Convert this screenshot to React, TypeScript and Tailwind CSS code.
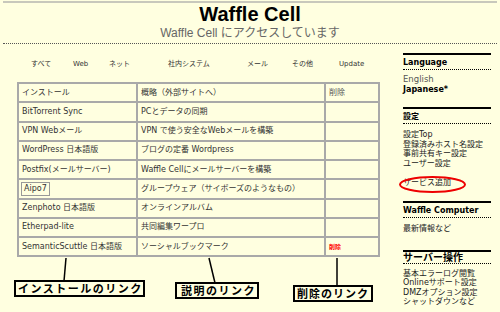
import React from 'react';

const navItems: { label: string; w: string }[] = [
    { label: 'すべて', w: 'w-[42px]' },
    { label: 'Web', w: 'w-[36px]' },
    { label: 'ネット', w: 'w-[59px]' },
    { label: '社内システム', w: 'w-[79px]' },
    { label: 'メール', w: 'w-[45px]' },
    { label: 'その他', w: 'w-[47px]' },
    { label: 'Update', w: 'w-[40px]' },
];

const rows: [string, string][] = [
    ['BitTorrent Sync', 'PCとデータの同期'],
    ['VPN Webメール', 'VPN で使う安全なWebメールを構築'],
    ['WordPress 日本語版', 'ブログの定番 Wordpress'],
    ['Postfix(メールサーバー)', 'Waffle Cellにメールサーバーを構築'],
    ['Aipo7', 'グループウェア（サイボーズのようなもの）'],
    ['Zenphoto 日本語版', 'オンラインアルバム'],
    ['Etherpad-lite', '共同編集ワープロ'],
    ['SemanticScuttle 日本語版', 'ソーシャルブックマーク'],
];

const cell = 'border border-[#a9a9a9] pl-[3px] align-middle';
const note = "absolute flex h-[17px] items-center whitespace-nowrap border-2 border-black font-['Noto_Sans_CJK_JP',sans-serif] text-[11px] font-bold text-black";

const SideHeading: React.FC<{ title: string; className?: string }> = ({ title, className }) => (
    <>
        <div className="h-[2px] bg-black" />
        <div className={`border-b border-dotted border-black font-bold text-black ${className ?? 'pt-px text-[8px] leading-[13px]'}`}>
            {title}
        </div>
    </>
);

const App: React.FC = () => {
    return (
        <div className="relative h-[312px] w-[500px] overflow-hidden bg-[#ffffe0] font-['DejaVu_Sans','Noto_Sans_CJK_JP',sans-serif] text-[#333]">
            {/* header */}
            <div className="mx-[3px] mt-px h-[2px] bg-[#c8c8bc]" />
            <h1 className="text-center font-['Liberation_Sans',sans-serif] text-[20px] font-bold leading-[23px] text-black">Waffle Cell</h1>
            <p className="text-center font-['Liberation_Sans','Noto_Sans_CJK_JP',sans-serif] text-[12px] leading-[14px] text-[#666]">
                Waffle Cell にアクセスしています
            </p>
            <div className="mx-[3px] mt-[3px] border-t border-dotted border-[#555]" />

            <div className="flex">
                {/* main column */}
                <div className="w-[400px]">
                    <div className="flex pl-[31px] pt-[15px] text-[7px] leading-[10px] text-[#333]">
                        {navItems.map((n) => (
                            <span key={n.label} className={n.w}>{n.label}</span>
                        ))}
                    </div>

                    <table className="ml-[17px] mt-[13px] w-[363px] table-fixed border-separate border-spacing-0 border border-[#a9a9a9] text-[8px] leading-[10px]">
                        <tbody>
                            <tr className="h-[19.25px]">
                                <td className={`${cell} w-[119px]`}>インストール</td>
                                <td className={`${cell} w-[188px]`}>概略（外部サイトへ）</td>
                                <td className={`${cell} w-[54px] text-[#555]`}>削除</td>
                            </tr>
                            {rows.map(([name, desc], i) => (
                                <tr key={name} className="h-[19.25px]">
                                    <td className={cell}>
                                        {name === 'Aipo7' ? (
                                            <span className="-ml-px inline-block border border-[#999] px-[2px] leading-[12px]">{name}</span>
                                        ) : (
                                            name
                                        )}
                                    </td>
                                    <td className={cell}>{desc}</td>
                                    <td className={`${cell} text-[6px] font-bold text-[#ff0000]`}>{i === rows.length - 1 ? '削除' : ''}</td>
                                </tr>
                            ))}
                        </tbody>
                    </table>
                </div>

                {/* sidebar */}
                <div className="ml-[3px] mt-[9px] w-[88px] text-[8px] leading-[9.5px] text-[#222]">
                    <SideHeading title="Language" />
                    <div className="pt-[5px]">
                        <div className="text-[8.5px] text-[#555]">English</div>
                        <div className="font-bold text-black">Japanese*</div>
                    </div>

                    <div className="mt-[13px]">
                        <SideHeading title="設定" />
                        <div className="pt-[6px]">
                            <div>設定Top</div>
                            <div>登録済みホスト名設定</div>
                            <div>事前共有キー設定</div>
                            <div>ユーザー設定</div>
                            <div className="h-[9.5px]" />
                            <div>サービス追加</div>
                        </div>
                    </div>

                    <div className="mt-[14px]">
                        <SideHeading title="Waffle Computer" />
                        <div className="pt-[6px]">
                            <div>最新情報など</div>
                        </div>
                    </div>

                    <div className="mt-[16px]">
                        <SideHeading title="サーバー操作" className="text-[10px] leading-[11px]" />
                        <div className="pt-[5px]">
                            <div>基本エラーログ閲覧</div>
                            <div>Onlineサポート設定</div>
                            <div>DMZオプション設定</div>
                            <div>シャットダウンなど</div>
                        </div>
                    </div>
                </div>
            </div>

            {/* annotations drawn over the screenshot */}
            <svg className="pointer-events-none absolute left-0 top-0" width="500" height="312">
                <line x1="66" y1="258" x2="64" y2="281" stroke="black" strokeWidth="1.5" />
                <line x1="209" y1="258" x2="215" y2="283" stroke="black" strokeWidth="1.5" />
                <line x1="337" y1="258" x2="337" y2="286" stroke="black" strokeWidth="1.5" />
                <ellipse cx="432.5" cy="184.5" rx="32.5" ry="7.5" fill="none" stroke="#ee0000" strokeWidth="2" />
            </svg>
            <div className={`${note} left-[14px] top-[280px] w-[131px] pl-[2px] tracking-[1.5px]`}>インストールのリンク</div>
            <div className={`${note} left-[175px] top-[282px] w-[84px] pl-[4px] tracking-[1.5px]`}>説明のリンク</div>
            <div className={`${note} left-[293px] top-[285px] w-[80px] pl-[2px] tracking-[1px]`}>削除のリンク</div>
        </div>
    );
};

export default App;
